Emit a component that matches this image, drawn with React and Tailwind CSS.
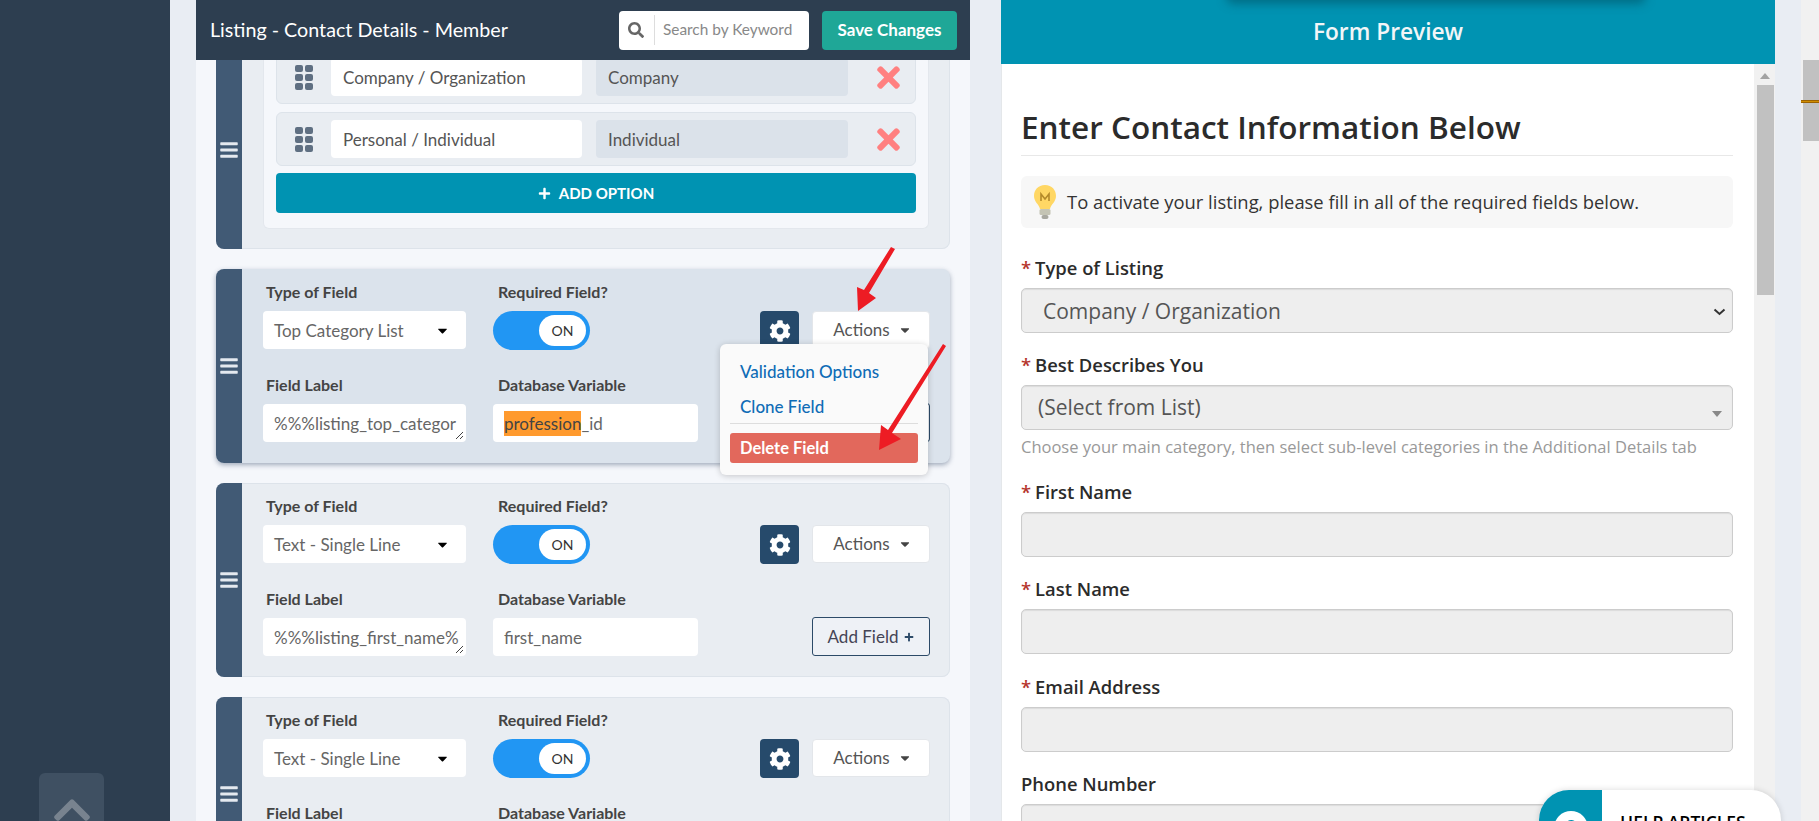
import React from 'react';
import { FaCog, FaSearch, FaTimes, FaBars, FaPlus, FaCaretDown, FaChevronUp, FaQuestion } from 'react-icons/fa';

const ui = "font-['Lato',sans-serif]";
const form = "font-['Open_Sans',sans-serif]";

const Grip = () => (
  <svg width="18" height="25" viewBox="0 0 18 25" className="shrink-0 fill-[#5f6f82]">
    <rect x="0" y="0" width="8" height="7" rx="2" />
    <rect x="10" y="0" width="8" height="7" rx="2" />
    <rect x="0" y="9" width="8" height="7" rx="2" />
    <rect x="10" y="9" width="8" height="7" rx="2" />
    <rect x="0" y="18" width="8" height="7" rx="2" />
    <rect x="10" y="18" width="8" height="7" rx="2" />
  </svg>
);

const OptionRow = ({ label, value }) => (
  <div className="flex h-[54px] items-center rounded-md border border-[#dde3ea] bg-[#e9edf2] pl-[18px]">
    <Grip />
    <div className="ml-[18px] flex h-[38px] w-[251px] items-center rounded-sm bg-white pl-3 pt-[1px] text-[17px] text-[#555]">{label}</div>
    <div className="ml-[14px] flex h-[38px] w-[252px] items-center rounded-sm bg-[#dbe2ea] pl-3 pt-[1px] text-[17px] text-[#555]">{value}</div>
    <FaTimes className="ml-[24px] text-[#ff8080]" size={33} />
  </div>
);

const FieldLabel = ({ children, second }) => (
  <div className={`h-[18px] text-[16px] font-bold leading-[18px] text-[#444] ${second ? 'pl-[5px]' : 'pl-[3px]'}`}>{children}</div>
);

const Toggle = () => (
  <div className="flex h-[39px] w-[97px] items-center justify-end rounded-full bg-[#2196f3] pr-1">
    <div className="flex h-[31px] w-[47px] items-center justify-center rounded-full bg-white text-[14px] text-[#333]">ON</div>
  </div>
);

const Grabber = () => (
  <div className="flex w-[26px] shrink-0 items-center justify-center rounded-l-lg bg-[#415a75]">
    <FaBars className="text-[#e4e9ef]" size={20} />
  </div>
);

const FieldCard = ({ type, label, variable, highlight, active, menu }) => (
  <div className={`relative flex h-[194px] shrink-0 rounded-lg ${active ? 'bg-[#dbe3ec] shadow-[0_2px_5px_rgba(60,80,110,0.45)]' : 'bg-[#e9edf2] shadow-[inset_0_0_0_1px_#dde3ea]'}`}>
    <Grabber />
    <div className="grid flex-1 grid-cols-[203px_205px_1fr] content-start gap-x-[27px] pl-[21px] pr-[20px] pt-[14px]">
      <FieldLabel>Type of Field</FieldLabel>
      <FieldLabel second>Required Field?</FieldLabel>
      <div />
      <div className="mt-[10px] flex h-[38px] items-center justify-between rounded-sm bg-white pl-[11px] pr-[16px] pt-[1px] text-[17px] text-[#666]">
        {type}
        <FaCaretDown className="text-black" size={15} />
      </div>
      <div className="mt-[10px]"><Toggle /></div>
      <div className="mt-[10px] flex justify-end gap-[13px]">
        <div className="flex h-[39px] w-[39px] items-center justify-center rounded-sm bg-[#264a6b] text-white"><FaCog size={22} /></div>
        <div className="flex h-[38px] w-[118px] items-center justify-center gap-2 rounded-sm border border-[#e3e6ea] bg-white pl-[3px] text-[17px] text-[#555]">
          Actions <FaCaretDown className="text-[#444]" size={14} />
        </div>
      </div>
      <div className="mt-[26px]"><FieldLabel>Field Label</FieldLabel></div>
      <div className="mt-[26px]"><FieldLabel second>Database Variable</FieldLabel></div>
      <div />
      <div className="relative mt-[10px] flex h-[38px] items-center overflow-hidden rounded-sm bg-white pl-[11px] pt-[1px] text-[17px] whitespace-nowrap text-[#666]">
        {label}
        <svg width="9" height="9" viewBox="0 0 9 9" className="absolute bottom-[2px] right-[2px] stroke-[#444]">
          <path d="M1 8 L8 1 M5 8 L8 5" fill="none" strokeWidth="1" />
        </svg>
      </div>
      <div className="mt-[10px] flex h-[38px] items-center rounded-sm bg-white pl-[11px] pt-[1px] text-[17px] text-[#666]">
        {highlight && <span className="bg-[#ff9a2e] text-[#444]">{highlight}</span>}{variable}
      </div>
      <div className="mt-[9px] flex justify-end">
        <div className="flex h-[39px] w-[118px] items-center justify-center gap-1.5 rounded-[3px] border border-[#2c4a68] bg-[#eef1f6] text-[17px] text-[#445]">
          Add Field <FaPlus className="text-[#2c4a68]" size={10} />
        </div>
      </div>
    </div>
    {menu && (
      <div className="absolute left-[504px] top-[75px] z-10 flex h-[131px] w-[208px] flex-col rounded-md bg-[#fafafa] px-[10px] shadow-[0_1px_6px_rgba(0,0,0,0.2)]">
        <div className="pl-[10px] pt-[18px] text-[17px] font-medium leading-[20px] text-[#0f6cb6]">Validation Options</div>
        <div className="pl-[10px] pt-[15px] text-[17px] font-medium leading-[20px] text-[#0f6cb6]">Clone Field</div>
        <div className="mt-[6px] border-t border-[#ddd]" />
        <div className="mt-[9px] flex h-[30px] items-center rounded-[3px] bg-[#e2685c] pl-[10px] text-[16.5px] font-bold text-white">Delete Field</div>
      </div>
    )}
  </div>
);

const Label = ({ required, children }) => (
  <div className="h-[24px] text-[18.4px] font-semibold leading-[24px] text-[#2b2b2b]">
    {required && <span className="mr-1 text-[#b5342c]">*</span>}
    {children}
  </div>
);

const Box = ({ children, className = '' }) => (
  <div className={`mt-[8px] flex h-[45px] items-center rounded-[5px] border border-[#ccc] bg-[#eee] shadow-[inset_0_1px_1px_rgba(0,0,0,0.08)] ${className}`}>{children}</div>
);

const Bulb = () => (
  <svg width="22" height="34" viewBox="0 0 22 34" className="shrink-0">
    <path d="M11 0 C4 0 0 5 0 11 C0 17 5 19 6 24 L16 24 C17 19 22 17 22 11 C22 5 18 0 11 0 Z" fill="#ffd764" />
    <path d="M7 16 V9 L11 14 L15 9 V16" fill="none" stroke="#b58a2a" strokeWidth="1.6" />
    <rect x="5.5" y="24" width="11" height="6" rx="1.5" fill="#c4c4b4" />
    <rect x="7.5" y="30" width="7" height="4" rx="2" fill="#a8a8a0" />
  </svg>
);

export default function App() {
  return (
    <div className="relative flex h-screen w-full overflow-hidden bg-[#e9edf3]">
      <aside className="flex w-[170px] shrink-0 flex-col justify-end bg-[#2d3e50] pl-[39px]">
        <div className="flex h-[48px] w-[65px] justify-center rounded-t-md bg-[#3f5062] pt-[16px] text-[#78838f]">
          <FaChevronUp size={42} />
        </div>
      </aside>

      <main className={`ml-[26px] flex w-[774px] shrink-0 flex-col bg-[#f5f7fb] ${ui}`}>
        <header className="z-20 flex h-[60px] shrink-0 items-center bg-[#2d3e50] pl-[14px] pr-[13px]">
          <h1 className="flex-1 text-[19.7px] font-normal text-white">Listing - Contact Details - Member</h1>
          <div className="flex h-[39px] w-[190px] items-center rounded-sm bg-white">
            <FaSearch className="ml-[9px] text-[#666]" size={16} />
            <div className="ml-[10px] h-[30px] border-l border-[#ddd]" />
            <span className="ml-[8px] text-[15.4px] text-[#888]">Search by Keyword</span>
          </div>
          <div className="ml-[13px] flex h-[39px] w-[135px] items-center justify-center rounded-sm bg-[#1fa797] text-[17px] font-bold text-white">Save Changes</div>
        </header>

        <div className="flex min-h-0 flex-1 flex-col gap-[20px] overflow-hidden px-[20px]">
          <div className="-mt-[10px] flex h-[199px] shrink-0 rounded-lg bg-[#e9edf2] shadow-[inset_0_0_0_1px_#dde3ea]">
            <Grabber />
            <div className="mx-[21px] mb-[20px] flex-1 rounded-md border border-[#e3e7ed] border-t-0 bg-[#f5f7fb] px-[12px]">
              <OptionRow label="Company / Organization" value="Company" />
              <div className="mt-[8px]"><OptionRow label="Personal / Individual" value="Individual" /></div>
              <div className="mt-[7px] flex h-[40px] items-center justify-center gap-2 rounded-sm bg-[#0093b2] text-[15px] font-bold text-white">
                <FaPlus size={13} /> ADD OPTION
              </div>
            </div>
          </div>
          <FieldCard active menu type="Top Category List" label="%%%listing_top_categor" highlight="profession" variable="_id" />
          <FieldCard type="Text - Single Line" label="%%%listing_first_name%" variable="first_name" />
          <FieldCard type="Text - Single Line" label="%%%listing_last_name%" variable="last_name" />
        </div>
      </main>

      <section className={`relative ml-[31px] flex w-[774px] shrink-0 flex-col ${form}`}>
        <div className="relative flex h-[64px] shrink-0 items-center justify-center overflow-hidden bg-[#0093b2] text-[22.7px] font-semibold text-[#f2f6f8]">
          <div className="absolute -top-[8px] left-[229px] h-[8px] w-[412px] rounded-full shadow-[0_0_10px_4px_rgba(0,85,105,0.6)]" />
          Form Preview
        </div>
        <div className="flex min-h-0 flex-1 overflow-hidden border-l border-[#e4e7ea] bg-white pl-[19px]">
          <div className="w-[712px] shrink-0">
            <h2 className="mt-[43px] h-[40px] text-[31.5px] font-semibold leading-[40px] text-[#2b2b2b]">Enter Contact Information Below</h2>
            <div className="mt-[8px] border-t border-[#e8e8e8]" />
            <div className="mt-[20px] flex h-[52px] items-center rounded-md bg-[#f7f7f7] pl-[13px] text-[18.4px] text-[#333]">
              <Bulb />
              <span className="ml-[11px]">To activate your listing, please fill in all of the required fields below.</span>
            </div>
            <div className="mt-[28px]"><Label required>Type of Listing</Label></div>
            <Box className="justify-between pl-[21px] pr-[6px] pt-[2px] text-[21px] text-[#555]">
              Company / Organization
              <svg width="13" height="8" viewBox="0 0 13 8" className="fill-none stroke-[#333] stroke-2"><path d="M1.5 1.5 L6.5 6 L11.5 1.5" /></svg>
            </Box>
            <div className="mt-[20px]"><Label required>Best Describes You</Label></div>
            <Box className="justify-between pl-[16px] pr-[10px] pt-[1px] text-[21px] text-[#555]">
              (Select from List)
              <div className="mt-[11px] h-0 w-0 border-x-[5px] border-t-[6px] border-x-transparent border-t-[#888]" />
            </Box>
            <div className="mt-[7px] h-[20px] text-[16.5px] leading-[20px] whitespace-nowrap text-[#999]">Choose your main category, then select sub-level categories in the Additional Details tab</div>
            <div className="mt-[23px]"><Label required>First Name</Label></div>
            <Box />
            <div className="mt-[20px]"><Label required>Last Name</Label></div>
            <Box />
            <div className="mt-[21px]"><Label required>Email Address</Label></div>
            <Box />
            <div className="mt-[20px]"><Label>Phone Number</Label></div>
            <Box />
          </div>
          <div className="ml-[21px] flex w-[22px] shrink-0 flex-col items-center bg-[#f1f1f1] pt-[9px]">
            <div className="h-0 w-0 border-x-[5px] border-b-[6px] border-x-transparent border-b-[#a3a3a3]" />
            <div className="mt-[6px] h-[210px] w-[17px] shrink-0 bg-[#c1c1c1]" />
          </div>
        </div>
        <div className="absolute left-[538px] top-[790px] flex h-[80px] w-[242px] overflow-hidden rounded-t-[30px] bg-white shadow-[0_0_6px_rgba(0,0,0,0.15)]">
          <div className="flex w-[63px] justify-center bg-[#0093b2] pt-[21px]">
            <div className="flex h-[34px] w-[34px] items-center justify-center rounded-full bg-white text-[#0093b2]"><FaQuestion size={16} /></div>
          </div>
          <div className="pl-[18px] pt-[19px] text-[17.5px] font-semibold text-black">HELP ARTICLES</div>
        </div>
      </section>

      <div className="ml-[26px] flex w-[18px] shrink-0 flex-col bg-[#f1f1f1] pt-[60px]">
        <div className="relative ml-[2px] h-[81px] bg-[#c1c1c1]">
          <div className="absolute -left-[2px] top-[40px] h-[3px] w-[18px] border-y border-[#9c6200] bg-[#cf8d00]" />
        </div>
      </div>

      <svg className="pointer-events-none absolute inset-0 z-30" width="1819" height="821">
        <path d="M891 247 L895 249 L869 293 L876 298 L858 311 L857 287 L864 290 Z" fill="#ed1c24" />
        <path d="M943 344 L946 346 L892 433 L901 439 L879 450 L881 425 L888 430 Z" fill="#ed1c24" />
      </svg>
    </div>
  );
}
